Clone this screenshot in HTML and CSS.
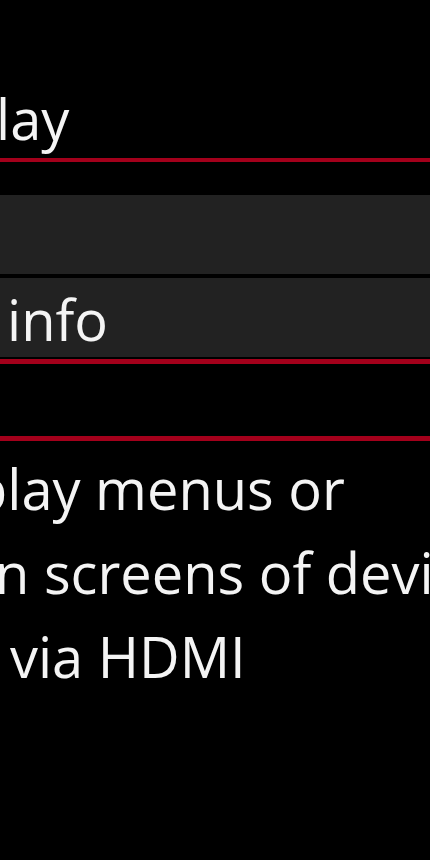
FILE: index.html
```html
<!DOCTYPE html>
<html lang="en">
<head>
    <meta charset="UTF-8">
    <meta name="viewport" content="width=device-width, initial-scale=1.0">
    <title>HDMI display</title>
    <link rel="stylesheet" href="styles.css">
</head>
<body>
    <div class="screen">
        <div class="title">lay</div>
        <div class="rule rule-top"></div>

        <div class="menu">
            <div class="menu-row"></div>
            <div class="menu-row">
                <span class="menu-label">info</span>
            </div>
        </div>
        <div class="rule rule-mid"></div>

        <div class="rule rule-desc"></div>
        <div class="desc">
            <div class="desc-line line-1">play menus or</div>
            <div class="desc-line line-2">n screens of devices</div>
            <div class="desc-line line-3">via HDMI</div>
        </div>
    </div>
</body>
</html>
```

FILE: styles.css
```css
html, body {
    margin: 0;
    padding: 0;
    background-color: #000;
}
body {
    width: 430px;
    height: 860px;
    overflow: hidden;
    font-family: "Open Sans", "Noto Sans", sans-serif;
    font-size: 56px;
    color: #f4f4f4;
}
.screen {
    padding-top: 80px;
}
.title {
    line-height: 76px;
    white-space: nowrap;
    text-indent: -4px;
}
.rule {
    background-color: #a3001b;
}
.rule-top {
    height: 4px;
    margin-top: 2px;
}
.menu {
    margin-top: 33px;
    display: flex;
    flex-direction: column;
    gap: 4px;
}
.menu-row {
    height: 79px;
    background-color: #222;
    box-sizing: border-box;
    padding-top: 3px;
}
.menu-label {
    display: block;
    line-height: 76px;
    padding-left: 7px;
}
.rule-mid {
    height: 5px;
    margin-top: 2px;
}
.rule-desc {
    height: 5px;
    margin-top: 72px;
}
.desc {
    margin-top: 5px;
}
.desc-line {
    line-height: 84px;
    white-space: nowrap;
}
.line-1 {
    text-indent: -27px;
}
.line-2 {
    text-indent: -5px;
}
.line-3 {
    text-indent: 10px;
}
```
